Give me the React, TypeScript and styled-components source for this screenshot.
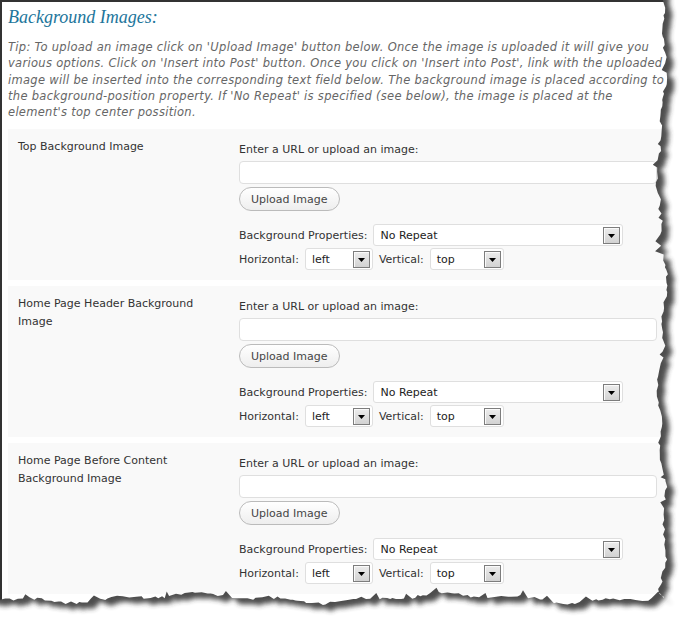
import React from "react";
import styled, { createGlobalStyle } from "styled-components";

const Global = createGlobalStyle`
  html, body { margin: 0; padding: 0; background: #fff; }
  body { font-family: "DejaVu Sans", Verdana, sans-serif; }
`;

const Screen = styled.div`
  position: relative;
  width: 691px;
  height: 621px;
  overflow: hidden;
  background: #fff;
`;

const Frame = styled.div`
  height: 100%;
  box-sizing: border-box;
  border-top: 2px solid #333;
  border-left: 2px solid #333;
  padding: 3px 0 0 6px;
`;

const Title = styled.h2`
  margin: 0;
  font-family: "Liberation Serif", "Times New Roman", serif;
  font-style: italic;
  font-weight: normal;
  font-size: 18px;
  line-height: 24px;
  color: #21759b;
`;

const Tip = styled.p`
  margin: 10px 0 9px;
  font-size: 11.5px;
  letter-spacing: 0.3px;
  font-style: italic;
  line-height: 16.25px;
  color: #666;
  white-space: nowrap;
`;

const Rows = styled.div`
  display: flex;
  flex-direction: column;
  gap: 6px;
  width: 660px;
`;

const Row = styled.div`
  display: grid;
  grid-template-columns: 231px 1fr;
  background: #f9f9f9;
  padding-bottom: 10px;
`;

const Label = styled.div`
  padding: 9px 20px 0 10px;
  font-size: 11px;
  line-height: 18px;
  color: #333;
`;

const Field = styled.div`
  display: flex;
  flex-direction: column;
  align-items: flex-start;
  padding: 12px 11px 0 0;
`;

const Caption = styled.div`
  font-size: 11px;
  line-height: 18px;
  color: #333;
`;

const TextInput = styled.div`
  margin-top: 2px;
  width: 100%;
  height: 23px;
  box-sizing: border-box;
  border: 1px solid #dfdfdf;
  border-radius: 4px;
  background: #fff;
`;

const UploadButton = styled.button`
  margin-top: 3px;
  height: 24px;
  padding: 0 11px;
  border: 1px solid #bbb;
  border-radius: 12px;
  background: linear-gradient(#ffffff, #eeeeee);
  font-family: "DejaVu Sans", Verdana, sans-serif;
  font-size: 11px;
  color: #464646;
`;

const PropLine = styled.div<{ $spaced?: boolean }>`
  display: flex;
  align-items: center;
  gap: 6px;
  margin-top: ${(p) => (p.$spaced ? 13 : 2)}px;
  font-size: 11px;
  color: #333;
`;

const SelectBox = styled.div<{ $w: number }>`
  width: ${(p) => p.$w}px;
  height: 22px;
  box-sizing: border-box;
  display: flex;
  align-items: center;
  justify-content: space-between;
  padding: 0 2px 0 6px;
  border: 1px solid #dfdfdf;
  border-radius: 3px;
  background: #fff;
  font-size: 11px;
  color: #222;
`;

const ArrowBox = styled.span`
  width: 17px;
  height: 17px;
  box-sizing: border-box;
  display: flex;
  align-items: center;
  justify-content: center;
  padding-top: 2px;
  border: 1px solid #7d7d7d;
  box-shadow: inset 1px 1px 0 #fafafa;
  background: linear-gradient(#ececec, #d2d2d2);
`;

const TornOverlay = styled.svg`
  position: absolute;
  left: 0;
  top: 0;
  pointer-events: none;
`;

function rng(seed: number) {
  return () => {
    seed = (seed + 0x6d2b79f5) | 0;
    let t = Math.imul(seed ^ (seed >>> 15), 1 | seed);
    t = (t + Math.imul(t ^ (t >>> 7), 61 | t)) ^ t;
    return ((t ^ (t >>> 14)) >>> 0) / 4294967296;
  };
}

function buildPaperPath() {
  const r = rng(17);
  const pts: string[] = ["M -20 -20"];
  let y = -20;
  while (y < 594) {
    const x =
      662 +
      3.5 * Math.sin(y / 37) +
      2 * Math.sin(y / 11 + 1) +
      (r() - 0.5) * 3 +
      (r() < 0.1 ? -(2 + r() * 4) : 0);
    pts.push(`L ${x.toFixed(1)} ${y.toFixed(1)}`);
    y += 2 + r() * 5;
  }
  pts.push("L 664 597");
  let x = 664;
  while (x > -20) {
    const yy =
      598 +
      3.5 * Math.sin(x / 41) +
      2 * Math.sin(x / 13 + 2) +
      (r() - 0.5) * 3 +
      (r() < 0.1 ? -(2 + r() * 4) : 0);
    pts.push(`L ${x.toFixed(1)} ${yy.toFixed(1)}`);
    x -= 2 + r() * 5;
  }
  pts.push("L -20 600 Z");
  return pts.join(" ");
}

const PAPER = buildPaperPath();

const Arrow = () => (
  <svg width="7" height="4" viewBox="0 0 7 4">
    <path d="M0 0 H7 L3.5 4 Z" fill="#000" />
  </svg>
);

const Select = ({ w, value }: { w: number; value: string }) => (
  <SelectBox $w={w}>
    <span>{value}</span>
    <ArrowBox>
      <Arrow />
    </ArrowBox>
  </SelectBox>
);

const rows = [
  "Top Background Image",
  "Home Page Header Background Image",
  "Home Page Before Content Background Image",
];

export default function App() {
  return (
    <Screen>
      <Global />
      <Frame>
        <Title>Background Images:</Title>
        <Tip>
          Tip: To upload an image click on 'Upload Image' button below. Once the image is uploaded it will give you
          <br />
          various options. Click on 'Insert into Post' button. Once you click on 'Insert into Post', link with the uploaded
          <br />
          image will be inserted into the corresponding text field below. The background image is placed according to
          <br />
          the background-position property. If 'No Repeat' is specified (see below), the image is placed at the
          <br />
          element's top center possition.
        </Tip>
        <Rows>
          {rows.map((label) => (
            <Row key={label}>
              <Label>{label}</Label>
              <Field>
                <Caption>Enter a URL or upload an image:</Caption>
                <TextInput />
                <UploadButton>Upload Image</UploadButton>
                <PropLine $spaced>
                  <span>Background Properties:</span>
                  <Select w={250} value="No Repeat" />
                </PropLine>
                <PropLine>
                  <span>Horizontal:</span>
                  <Select w={68} value="left" />
                  <span>Vertical:</span>
                  <Select w={74} value="top" />
                </PropLine>
              </Field>
            </Row>
          ))}
        </Rows>
      </Frame>
      <TornOverlay width="691" height="621" viewBox="0 0 691 621">
        <defs>
          <filter id="tornBlur" x="-10%" y="-10%" width="120%" height="120%">
            <feGaussianBlur stdDeviation="2.5" />
          </filter>
          <mask id="outside">
            <rect x="0" y="0" width="691" height="621" fill="#fff" />
            <path d={PAPER} fill="#000" />
          </mask>
        </defs>
        <g mask="url(#outside)">
          <rect x="0" y="0" width="691" height="621" fill="#fff" />
          <path d={PAPER} transform="translate(7 6)" fill="#2e2e2e" opacity="0.85" filter="url(#tornBlur)" />
        </g>
      </TornOverlay>
    </Screen>
  );
}
